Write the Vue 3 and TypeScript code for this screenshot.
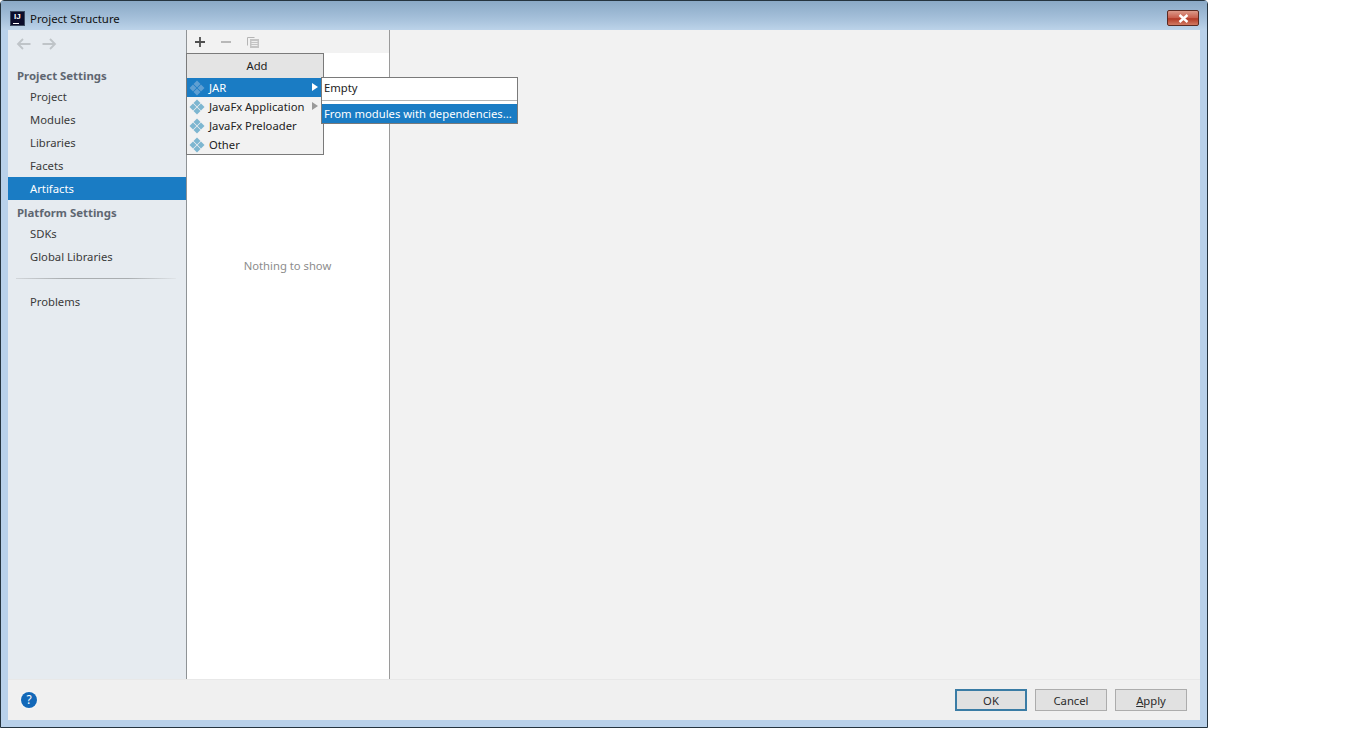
<script setup lang="ts">
const projectItems: string[] = ['Project', 'Modules', 'Libraries', 'Facets', 'Artifacts']
const platformItems: string[] = ['SDKs', 'Global Libraries']
const menuItems = [
  { label: 'JAR', arrow: true, active: true },
  { label: 'JavaFx Application', arrow: true, active: false },
  { label: 'JavaFx Preloader', arrow: false, active: false },
  { label: 'Other', arrow: false, active: false },
]
</script>

<template>
  <div class="page">
    <div class="window">
      <header class="titlebar">
        <div class="logo"><span class="logo-t">IJ</span><span class="logo-u"></span></div>
        <span class="title">Project Structure</span>
        <button class="close">
          <svg width="11" height="9" viewBox="0 0 11 9"><path d="M1.5 1 L9.5 8 M9.5 1 L1.5 8" stroke="#fff" stroke-width="2.4" fill="none" /></svg>
        </button>
      </header>
      <div class="client">
        <div class="main">
          <aside class="sidebar">
            <div class="nav-arrows">
              <svg width="15" height="12" viewBox="0 0 15 12"><path d="M14.5 6H2M7 1 2 6l5 5" stroke="#bfc4c8" stroke-width="1.8" fill="none" /></svg>
              <svg width="15" height="12" viewBox="0 0 15 12"><path d="M.5 6H13M8 1l5 5-5 5" stroke="#bfc4c8" stroke-width="1.8" fill="none" /></svg>
            </div>
            <div class="group first">Project Settings</div>
            <div v-for="i in projectItems" :key="i" class="item" :class="{ selected: i === 'Artifacts' }">{{ i }}</div>
            <div class="group second">Platform Settings</div>
            <div v-for="i in platformItems" :key="i" class="item">{{ i }}</div>
            <div class="rule"></div>
            <div class="item">Problems</div>
          </aside>
          <section class="list">
            <div class="toolbar">
              <svg width="12" height="12" viewBox="0 0 12 12"><path d="M6 1v10M1 6h10" stroke="#4f4f4f" stroke-width="1.8" /></svg>
              <svg width="12" height="12" viewBox="0 0 12 12"><path d="M1 6h10" stroke="#a9a9a9" stroke-width="1.6" /></svg>
              <svg width="14" height="14" viewBox="0 0 14 14"><path d="M1.5 2.5h7M1.5 2.5v8" stroke="#b5b5b5" fill="none" /><rect x="4" y="4" width="9" height="9" fill="#c4c4c4" /><path d="M5.5 6.5h6M5.5 8.5h6M5.5 10.5h6" stroke="#eee" /></svg>
            </div>
            <div class="list-body">Nothing to show</div>
          </section>
          <section class="detail"></section>
        </div>
        <footer class="footer">
          <div class="help">?</div>
          <div class="buttons">
            <button class="btn default">OK</button>
            <button class="btn">Cancel</button>
            <button class="btn"><u>A</u>pply</button>
          </div>
        </footer>
      </div>
      <div class="popup">
        <div class="popup-head">Add</div>
        <div v-for="m in menuItems" :key="m.label" class="popup-row" :class="{ active: m.active }">
          <svg class="gem" width="16" height="16" viewBox="0 0 16 16">
            <g :fill="m.active ? '#5f9fd2' : '#7db6d0'">
              <path d="M8 .5l3.5 3.5L8 7.5 4.500 4z" />
              <path d="M4 4.500l3.500 3.500L4 11.500 .5 8z" />
              <path d="M12 4.500l3.500 3.500-3.500 3.500L8.500 8z" />
              <path d="M8 8.500l3.500 3.500L8 15.500 4.500 12z" />
            </g>
          </svg>
          <span class="popup-label">{{ m.label }}</span>
          <span v-if="m.arrow" class="tri"></span>
        </div>
      </div>
      <div class="submenu">
        <div class="sub-row">Empty</div>
        <div class="sub-sep"></div>
        <div class="sub-row sel">From modules with dependencies...</div>
      </div>
    </div>
  </div>
</template>

<style>
html, body { margin: 0; background: #fff; }
</style>

<style scoped>
.page {
  width: 1366px;
  height: 732px;
  background: #fff;
  overflow: hidden;
  font-family: "Noto Sans", "Open Sans", sans-serif;
  font-size: 11.25px;
  color: #2b2b2b;
}
.window {
  position: relative;
  width: 1208px;
  height: 728px;
  box-sizing: border-box;
  border: 1px solid #25343f;
  border-radius: 4px 4px 0 0;
  background: #b9d1ea;
  padding: 0 7px 7px 7px;
  display: flex;
  flex-direction: column;
}
.titlebar {
  height: 29px;
  flex: none;
  margin: 0 -7px;
  padding: 5px 8px 0 9px;
  box-sizing: border-box;
  display: flex;
  align-items: center;
  background: linear-gradient(180deg, #8aa9c6 0%, #a5c0da 60%, #bcd3e9 100%);
}
.logo {
  width: 15px;
  height: 15px;
  box-sizing: border-box;
  background: #0b0d2c;
  position: relative;
  margin-right: 5px;
  border: 1px solid #3b4a60;
}
.logo-t {
  position: absolute;
  left: 3px;
  top: -1px;
  font-size: 8px;
  font-weight: 700;
  line-height: 11px;
  color: #fff;
  font-family: "Liberation Sans", sans-serif;
}
.logo-u {
  position: absolute;
  left: 2px;
  bottom: 1px;
  width: 6px;
  height: 1px;
  background: #fff;
}
.title {
  color: #111;
  font-size: 11.4px;
}
.close {
  margin-left: auto;
  width: 32px;
  height: 16px;
  padding: 0;
  border: 1px solid #5a2a22;
  border-radius: 2px;
  background: linear-gradient(180deg, #dc9a8a 0%, #c9604e 48%, #b23a26 55%, #d27a62 100%);
  display: flex;
  align-items: center;
  justify-content: center;
}
.client {
  flex: 1;
  display: flex;
  flex-direction: column;
  background: #f2f2f2;
  min-height: 0;
}
.main {
  flex: 1;
  display: flex;
  min-height: 0;
}
.sidebar {
  width: 178px;
  flex: none;
  background: #e6ebf0;
  border-right: 1px solid #8f9396;
  display: flex;
  flex-direction: column;
}
.nav-arrows {
  height: 28px;
  flex: none;
  padding-left: 8px;
  display: flex;
  align-items: center;
  gap: 11px;
}
.group {
  font-weight: 700;
  color: #5e6670;
  padding-left: 9px;
  line-height: 26px;
  font-size: 11.4px;
}
.group.first {
  height: 27px;
  line-height: 36px;
}
.group.second {
  height: 22px;
}
.item {
  height: 23px;
  line-height: 23px;
  padding-left: 22px;
  color: #3a3a3a;
}
.item.selected {
  background: #1a7cc4;
  color: #fff;
}
.rule {
  height: 1px;
  margin: 10px 10px 11px 8px;
  background: linear-gradient(90deg, #d2d6da, #a9adb0 30%, #a9adb0 70%, #e0e4e8);
}
.list {
  width: 203px;
  flex: none;
  box-sizing: border-box;
  background: #fff;
  border-right: 1px solid #9a9a9a;
  display: flex;
  flex-direction: column;
}
.toolbar {
  height: 23px;
  flex: none;
  background: #f2f2f2;
  display: flex;
  align-items: center;
  gap: 14px;
  padding-left: 7px;
}
.list-body {
  flex: 1;
  display: flex;
  justify-content: center;
  padding-top: 205px;
  padding-right: 1px;
  color: #8c8c8c;
}
.detail {
  flex: 1;
}
.footer {
  height: 41px;
  flex: none;
  background: #f0f0f0;
  border-top: 1px solid #e8e8e8;
  box-sizing: border-box;
  display: flex;
  align-items: center;
  padding: 0 13px;
}
.help {
  width: 16px;
  height: 16px;
  border-radius: 50%;
  background: #1268b8;
  color: #fff;
  text-align: center;
  font-size: 12px;
  line-height: 16px;
  box-shadow: 0 0 3px #fff;
}
.buttons {
  margin-left: auto;
  display: flex;
  gap: 8px;
}
.btn {
  width: 72px;
  height: 22px;
  box-sizing: border-box;
  padding: 0;
  border: 1px solid #acacac;
  background: #e1e1e1;
  font: inherit;
  color: #2b2b2b;
}
.btn.default {
  border: 2px solid #3a7ca5;
}
.popup {
  position: absolute;
  left: 185px;
  top: 52px;
  width: 138px;
  height: 102px;
  box-sizing: border-box;
  background: #f2f2f2;
  border: 1px solid #7a7a7a;
  z-index: 2;
}
.popup-head {
  height: 24px;
  line-height: 24px;
  text-align: center;
  background: #e4e4e4;
  padding-left: 4px;
  color: #222;
}
.popup-row {
  height: 19px;
  display: flex;
  align-items: center;
  position: relative;
  color: #222;
}
.popup-row.active {
  background: #1a7cc4;
  color: #fff;
}
.gem {
  margin: 0 4px 0 2px;
  flex: none;
}
.popup-label {
  white-space: nowrap;
}
.tri {
  position: absolute;
  right: 5px;
  top: 5px;
  border-left: 6px solid #9a9a9a;
  border-top: 4px solid transparent;
  border-bottom: 4px solid transparent;
}
.popup-row.active .tri {
  border-left-color: #fff;
}
.submenu {
  position: absolute;
  left: 320px;
  top: 76px;
  width: 197px;
  height: 47px;
  box-sizing: border-box;
  background: #fff;
  border: 1px solid #7a7a7a;
  z-index: 3;
}
.sub-row {
  height: 22px;
  line-height: 20px;
  padding-left: 2px;
  white-space: nowrap;
  color: #222;
}
.sub-sep {
  height: 1px;
  background: #b4b4b4;
  margin-bottom: 3px;
}
.sub-row.sel {
  height: 19px;
  line-height: 19px;
  background: #1a7cc4;
  color: #fff;
}
</style>
